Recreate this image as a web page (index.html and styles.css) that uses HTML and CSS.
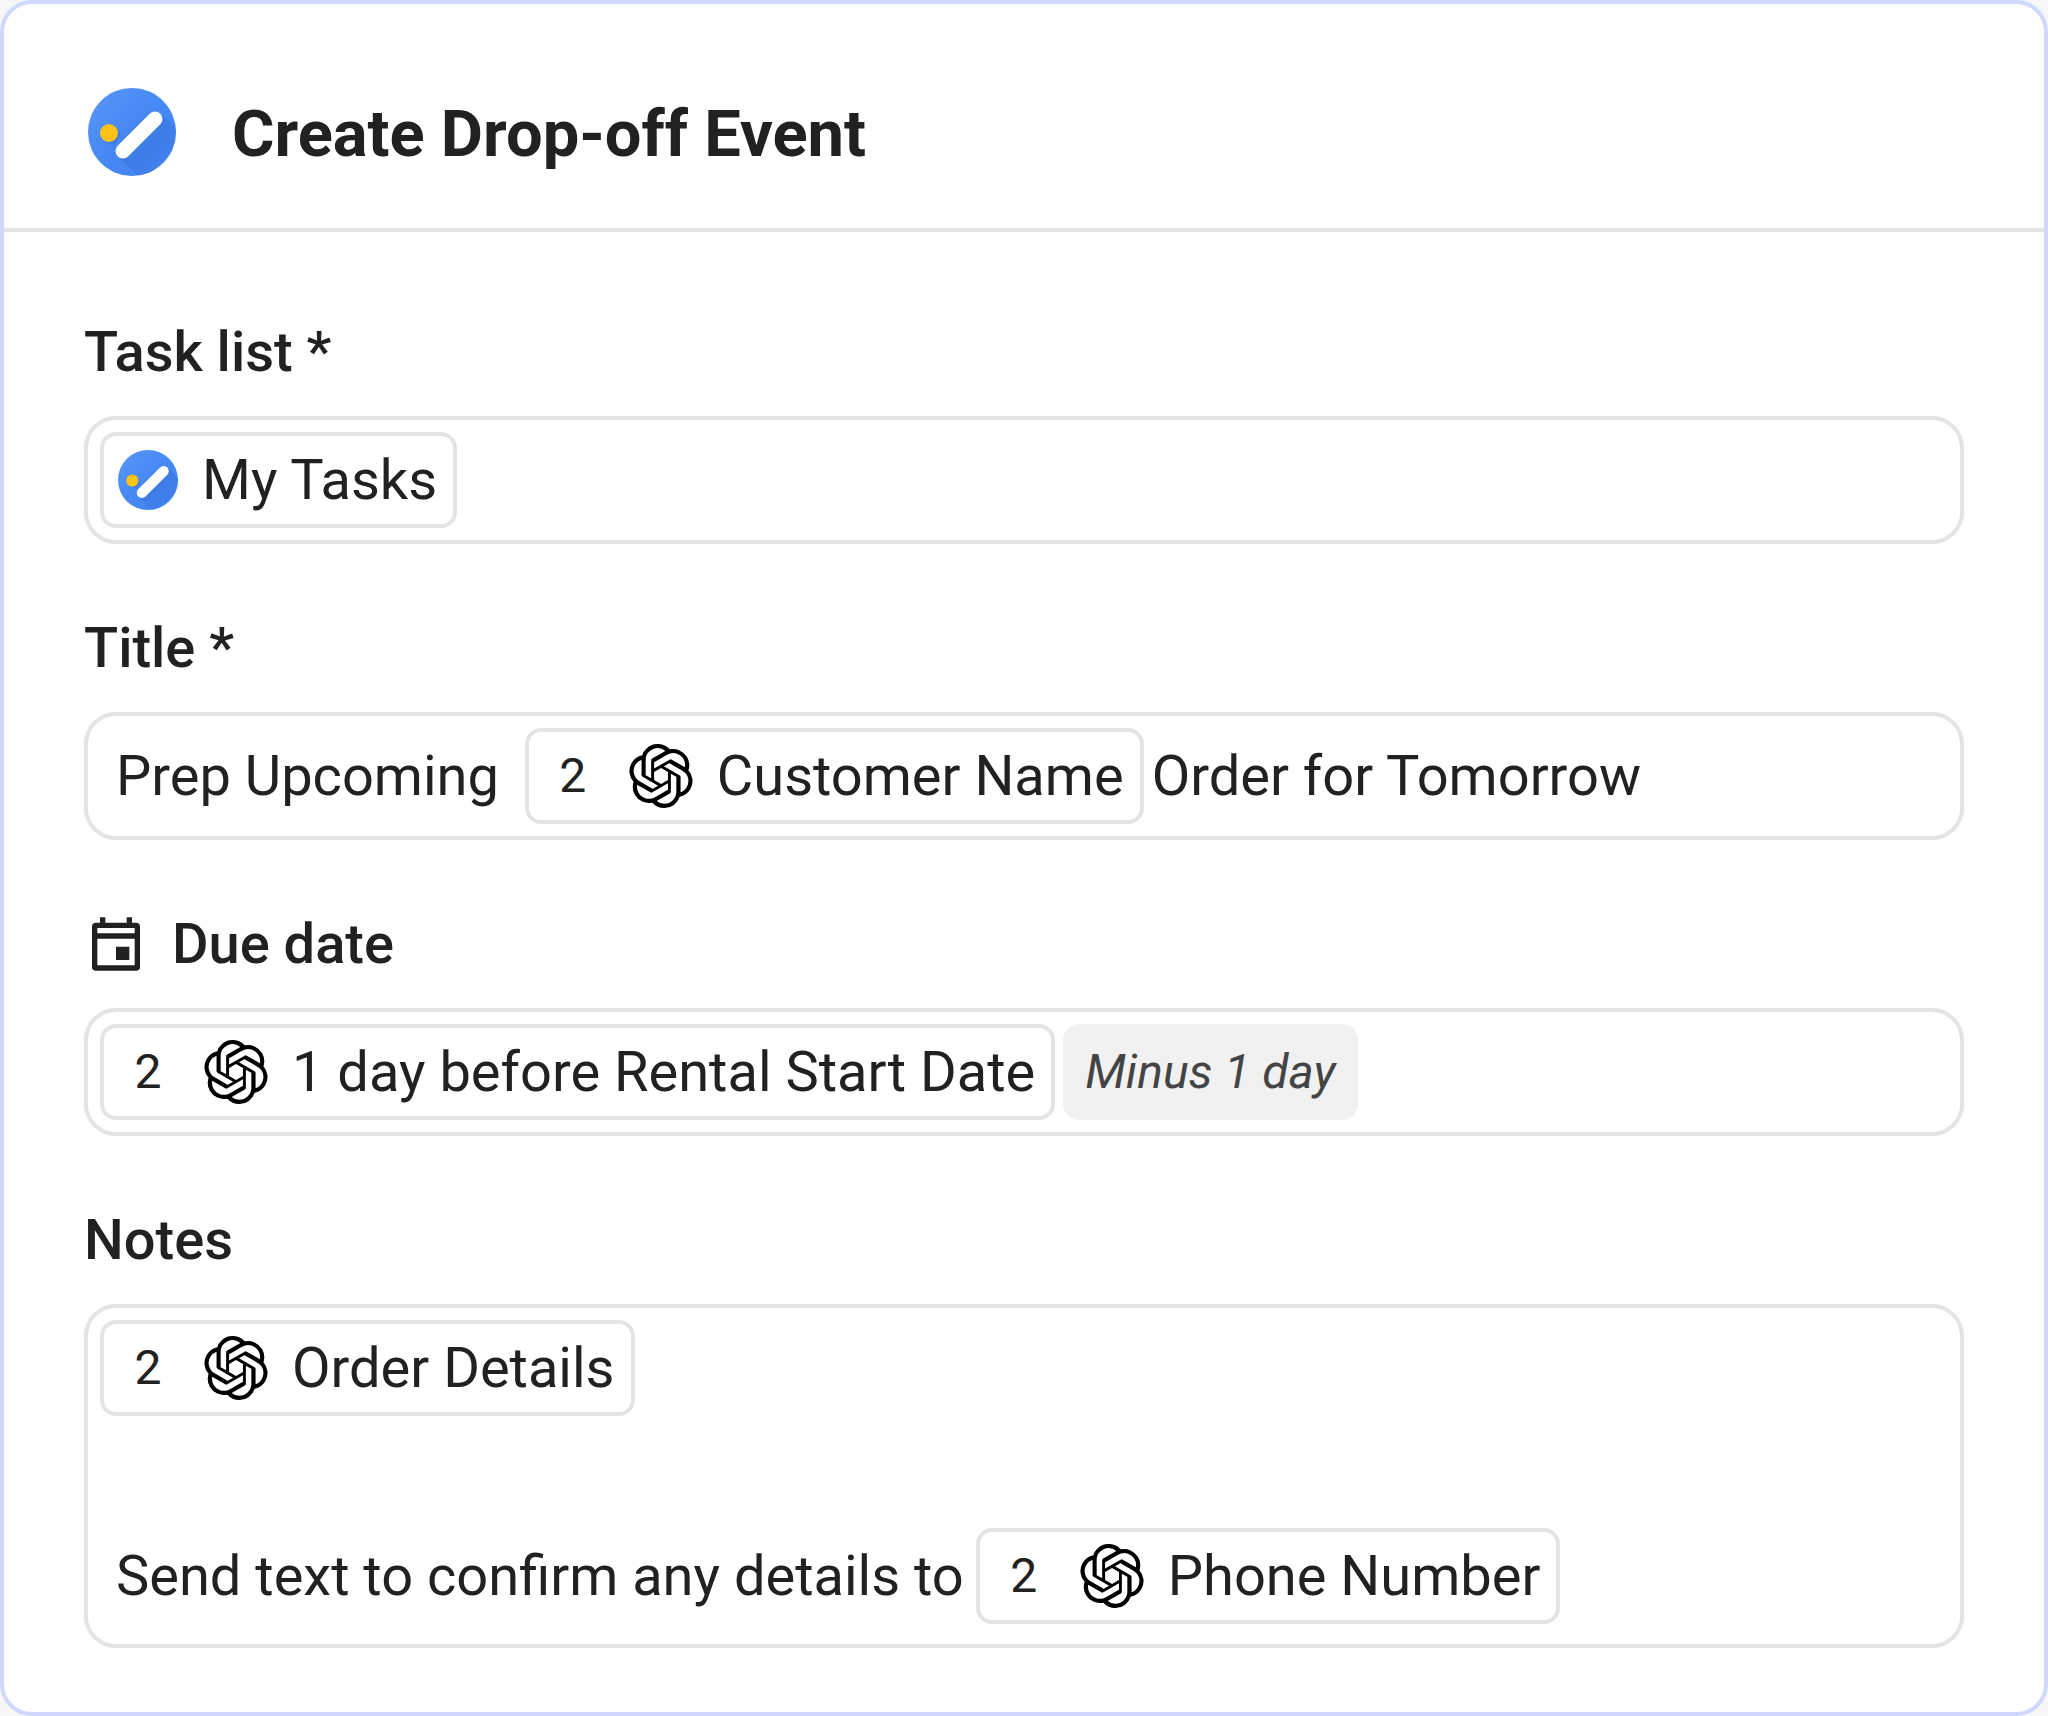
FILE: index.html
```html
<!DOCTYPE html>
<html lang="en">
<head>
    <meta charset="UTF-8">
    <meta name="viewport" content="width=device-width, initial-scale=1.0">
    <title>Create Drop-off Event</title>
    <link rel="stylesheet" href="styles.css">
</head>
<body>
    <!-- shared icons -->
    <svg class="sprite" aria-hidden="true">
        <defs>
            <linearGradient id="disc" x1="0" y1="0" x2="1" y2="1">
                <stop offset="0.1" stop-color="#5693f7"/>
                <stop offset="0.5" stop-color="#4688f4"/>
                <stop offset="0.9" stop-color="#4285f2"/>
            </linearGradient>
            <linearGradient id="shade" gradientUnits="userSpaceOnUse" x1="50" y1="46" x2="74" y2="70">
                <stop offset="0" stop-color="#2f62c4" stop-opacity="0.4"/>
                <stop offset="1" stop-color="#3b78e7" stop-opacity="0.4"/>
            </linearGradient>
            <clipPath id="round"><circle cx="44" cy="44" r="44"/></clipPath>
        </defs>
        <symbol id="tasks" viewBox="0 0 88 88">
            <circle cx="44" cy="44" r="44" fill="url(#disc)"/>
            <g clip-path="url(#round)" fill="url(#shade)">
                <path d="M73 26L98 51L55 93L30 68Z"/>
                <path d="M27 39L33 45L27 57L15 52Z"/>
            </g>
            <circle cx="21" cy="45" r="9" fill="#fcc117"/>
            <path d="M67 31L35 63" stroke="#fff" stroke-width="15" stroke-linecap="round"/>
        </symbol>
        <symbol id="openai" viewBox="0 0 24 24">
            <path d="M22.2819 9.8211a5.9847 5.9847 0 0 0-.5157-4.9108 6.0462 6.0462 0 0 0-6.5098-2.9A6.0651 6.0651 0 0 0 4.9807 4.1818a5.9847 5.9847 0 0 0-3.9977 2.9 6.0462 6.0462 0 0 0 .7427 7.0966 5.98 5.98 0 0 0 .511 4.9107 6.051 6.051 0 0 0 6.5146 2.9001A5.9847 5.9847 0 0 0 13.2599 24a6.0557 6.0557 0 0 0 5.7718-4.2058 5.9894 5.9894 0 0 0 3.9977-2.9001 6.0557 6.0557 0 0 0-.7475-7.0729zm-9.022 12.6081a4.4755 4.4755 0 0 1-2.8764-1.0408l.1419-.0804 4.7783-2.7582a.7948.7948 0 0 0 .3927-.6813v-6.7369l2.02 1.1686a.071.071 0 0 1 .038.052v5.5826a4.504 4.504 0 0 1-4.4945 4.4944zm-9.6607-4.1254a4.4708 4.4708 0 0 1-.5346-3.0137l.142.0852 4.783 2.7582a.7712.7712 0 0 0 .7806 0l5.8428-3.3685v2.3324a.0804.0804 0 0 1-.0332.0615L9.74 19.9502a4.4992 4.4992 0 0 1-6.1408-1.6464zM2.3408 7.8956a4.485 4.485 0 0 1 2.3655-1.9728V11.6a.7664.7664 0 0 0 .3879.6765l5.8144 3.3543-2.0201 1.1685a.0757.0757 0 0 1-.071 0l-4.8303-2.7865A4.504 4.504 0 0 1 2.3408 7.872zm16.5963 3.8558L13.1038 8.364 15.1192 7.2a.0757.0757 0 0 1 .071 0l4.8303 2.7913a4.4944 4.4944 0 0 1-.6765 8.1042v-5.6772a.79.79 0 0 0-.407-.667zm2.0107-3.0231l-.142-.0852-4.7735-2.7818a.7759.7759 0 0 0-.7854 0L9.409 9.2297V6.8974a.0662.0662 0 0 1 .0284-.0615l4.8303-2.7866a4.4992 4.4992 0 0 1 6.6802 4.66zM8.3065 12.863l-2.02-1.1638a.0804.0804 0 0 1-.038-.0567V6.0742a4.4992 4.4992 0 0 1 7.3757-3.4537l-.142.0805L8.704 5.459a.7948.7948 0 0 0-.3927.6813zm1.0976-2.3654l2.602-1.4998 2.6069 1.4998v2.9994l-2.5974 1.4997-2.6067-1.4997Z"/>
        </symbol>
        <symbol id="calendar" viewBox="0 0 24 24">
            <path fill-rule="evenodd" d="M6 2h2v2h8V2h2v2h1.500a1.500 1.500 0 0 1 1.500 1.500v15a1.500 1.500 0 0 1-1.500 1.500h-15a1.500 1.500 0 0 1-1.500-1.500v-15a1.500 1.500 0 0 1 1.500-1.500H6zM5 6v2h14V6zM5 10v10h14V10zM12 13h5v5h-5z"/>
        </symbol>
    </svg>

    <form class="card">
        <header class="card-header">
            <svg class="app-icon"><use href="#tasks"/></svg>
            <h1>Create Drop-off Event</h1>
        </header>

        <div class="fields">
            <div class="field">
                <div class="label" id="taskListLabel">Task list *</div>
                <div class="box" role="textbox" aria-labelledby="taskListLabel" contenteditable="true" spellcheck="false">
                    <div class="line">
                        <span class="chip" contenteditable="false"><svg class="chip-app"><use href="#tasks"/></svg>My Tasks</span>
                    </div>
                </div>
            </div>

            <div class="field">
                <div class="label" id="titleLabel">Title *</div>
                <div class="box" role="textbox" aria-labelledby="titleLabel" contenteditable="true" spellcheck="false">
                    <div class="line">
                        <span class="text">Prep Upcoming </span>
                        <span class="chip" contenteditable="false"><span class="step">2</span><svg class="chip-ai"><use href="#openai"/></svg>Customer Name</span>
                        <span class="text">Order for Tomorrow</span>
                    </div>
                </div>
            </div>

            <div class="field">
                <div class="label" id="dueLabel"><svg class="label-icon"><use href="#calendar"/></svg>Due date</div>
                <div class="box" role="textbox" aria-labelledby="dueLabel" contenteditable="true" spellcheck="false">
                    <div class="line">
                        <span class="chip" contenteditable="false"><span class="step">2</span><svg class="chip-ai"><use href="#openai"/></svg>1 day before Rental Start Date</span>
                        <em class="modifier" contenteditable="false">Minus 1 day</em>
                    </div>
                </div>
            </div>

            <div class="field">
                <div class="label" id="notesLabel">Notes</div>
                <div class="box notes" role="textbox" aria-multiline="true" aria-labelledby="notesLabel" contenteditable="true" spellcheck="false">
                    <div class="line">
                        <span class="chip" contenteditable="false"><span class="step">2</span><svg class="chip-ai"><use href="#openai"/></svg>Order Details</span>
                    </div>
                    <div class="line"></div>
                    <div class="line">
                        <span class="text">Send text to confirm any details to</span>
                        <span class="chip" contenteditable="false"><span class="step">2</span><svg class="chip-ai"><use href="#openai"/></svg>Phone Number</span>
                    </div>
                </div>
            </div>
        </div>
    </form>
</body>
</html>
```
FILE: styles.css
```css
* {
    box-sizing: border-box;
}

body {
    margin: 0;
    background: #f7f7f7;
    color: #212121;
    font-family: Roboto, "Liberation Sans", sans-serif;
    font-size: 56px;
    line-height: 72px;
}

.sprite {
    position: absolute;
    width: 0;
    height: 0;
}

.card {
    background: #fff;
    border: 4px solid #d0d8ff;
    border-radius: 32px;
}

.card-header {
    display: flex;
    align-items: center;
    gap: 56px;
    padding: 84px 84px 52px;
    border-bottom: 4px solid #e4e4e4;
}

.card-header h1 {
    margin: 0;
    padding-top: 4px;
    font-size: 65px;
    font-weight: 700;
}

.app-icon {
    width: 88px;
    height: 88px;
}

.fields {
    display: flex;
    flex-direction: column;
    gap: 68px;
    padding: 84px 80px 64px;
}

.label {
    display: flex;
    align-items: center;
    gap: 24px;
    margin-bottom: 28px;
    font-weight: 500;
}

.label-icon {
    width: 64px;
    height: 64px;
    fill: #212121;
}

.box {
    display: flex;
    flex-direction: column;
    gap: 8px;
    padding: 12px;
    border: 4px solid #e4e4e4;
    border-radius: 32px;
    outline: none;
}

.box:focus {
    border-color: #d0d8ff;
}

.notes {
    padding-bottom: 20px;
}

.line {
    display: flex;
    align-items: center;
    gap: 8px;
    min-height: 96px;
}

.text {
    white-space: pre;
}

.text:first-child {
    margin: 0 4px 0 16px;
}

.chip {
    display: flex;
    align-items: center;
    height: 96px;
    padding: 0 16px 0 14px;
    border: 4px solid #e4e4e4;
    border-radius: 16px;
    white-space: nowrap;
}

.chip-app {
    width: 60px;
    height: 60px;
    margin-right: 24px;
}

.chip-ai {
    width: 64px;
    height: 64px;
    margin: 0 24px 0 26px;
    fill: #000;
}

.step {
    width: 60px;
    font-size: 48px;
    text-align: center;
}

.modifier {
    display: flex;
    align-items: center;
    height: 96px;
    padding: 0 22px;
    border-radius: 16px;
    background: #f1f1f1;
    color: #444;
    font-size: 48px;
    white-space: nowrap;
}
```
